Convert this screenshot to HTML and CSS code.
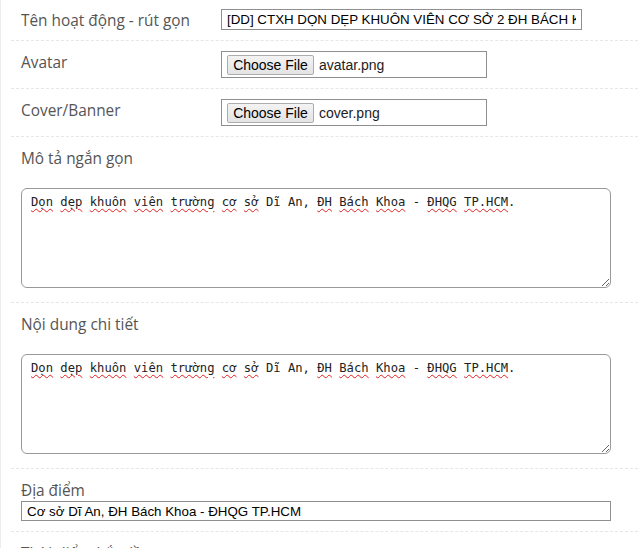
FILE: index.html
```html
<!DOCTYPE html>
<html lang="vi">
<head>
<meta charset="utf-8">
<title>Form hoạt động</title>
<link rel="stylesheet" href="styles.css">
</head>
<body>
<div class="panel">
  <div class="row row-inline">
    <label class="label">Tên hoạt động - rút gọn</label>
    <input class="text-input short" type="text" value="[DD] CTXH DỌN DẸP KHUÔN VIÊN CƠ SỞ 2 ĐH BÁCH KHOA">
  </div>
  <div class="row row-inline row-file">
    <label class="label">Avatar</label>
    <div class="file-box"><span class="file-btn">Choose File</span><span class="file-name">avatar.png</span></div>
  </div>
  <div class="row row-inline row-file">
    <label class="label">Cover/Banner</label>
    <div class="file-box"><span class="file-btn">Choose File</span><span class="file-name">cover.png</span></div>
  </div>
  <div class="row row-stack">
    <label class="label">Mô tả ngắn gọn</label>
    <div class="area"><span class="sp">Dọn</span> <span class="sp">dẹp</span> <span class="sp">khuôn</span> <span class="sp">viên</span> <span class="sp">trường</span> <span class="sp">cơ</span> <span class="sp">sở</span> Dĩ An, <span class="sp">ĐH</span> <span class="sp">Bách</span> <span class="sp">Khoa</span> - <span class="sp">ĐHQG</span> <span class="sp">TP.HCM</span>.</div>
  </div>
  <div class="row row-stack">
    <label class="label">Nội dung chi tiết</label>
    <div class="area"><span class="sp">Dọn</span> <span class="sp">dẹp</span> <span class="sp">khuôn</span> <span class="sp">viên</span> <span class="sp">trường</span> <span class="sp">cơ</span> <span class="sp">sở</span> Dĩ An, <span class="sp">ĐH</span> <span class="sp">Bách</span> <span class="sp">Khoa</span> - <span class="sp">ĐHQG</span> <span class="sp">TP.HCM</span>.</div>
  </div>
  <div class="row row-place">
    <label class="label">Địa điểm</label>
    <input class="text-input wide" type="text" value="Cơ sở Dĩ An, ĐH Bách Khoa - ĐHQG TP.HCM">
  </div>
  <div class="row row-place">
    <label class="label">Thời điểm bắt đầu</label>
  </div>
</div>
</body>
</html>
```

FILE: styles.css
```css
html, body {
  margin: 0;
  padding: 0;
  background: #fff;
}
body {
  font-family: "Open Sans", "Noto Sans", sans-serif;
}
.panel {
  border-left: 1px solid #ececec;
  min-height: 548px;
  box-sizing: border-box;
}
.row {
  margin-left: 10px;
  padding-left: 10px;
  border-bottom: 1px dashed #e6e6e6;
}
.label {
  display: block;
  font-size: 15.4px;
  line-height: 20px;
  color: #555;
  margin-top: 2px;
}
.row-inline {
  display: flex;
  align-items: flex-start;
  padding-top: 9px;
  padding-bottom: 10px;
}
.row-inline .label {
  width: 200px;
  height: 19px;
  flex: none;
}
.row-file {
  padding-top: 10px;
  padding-bottom: 10px;
}
.text-input {
  box-sizing: border-box;
  height: 21px;
  margin: 0;
  padding: 0 5px;
  border: 1px solid #8f8f8f;
  border-radius: 0;
  font-family: "Liberation Sans", Arial, sans-serif;
  font-size: 13.333px;
  color: #000;
  background: #fff;
  outline: none;
}
.short {
  width: 361px;
}
.wide {
  width: 590px;
  height: 20px;
  margin-top: 0;
  display: block;
}
.file-box {
  box-sizing: border-box;
  width: 266px;
  height: 27px;
  border: 1px solid #8f8f8f;
  display: flex;
  align-items: center;
  padding-left: 5px;
  font-family: "Liberation Sans", Arial, sans-serif;
  font-size: 13.333px;
}
.file-btn {
  box-sizing: border-box;
  height: 20px;
  width: 87px;
  display: flex;
  align-items: center;
  justify-content: center;
  border: 1px solid #adadad;
  border-radius: 2px;
  background: linear-gradient(#f3f3f3, #e3e3e3);
  color: #000;
  font-size: 14px;
}
.file-name {
  margin-left: 5px;
  color: #222;
  font-size: 14px;
}
.row-stack {
  padding-top: 10px;
  padding-bottom: 14px;
}
.area {
  box-sizing: border-box;
  margin-top: 19px;
  width: 590px;
  height: 100px;
  border: 1px solid #999;
  border-radius: 6px;
  padding: 6px 9px;
  font-family: "DejaVu Sans Mono", "Liberation Mono", monospace;
  font-size: 12.2px;
  line-height: 15px;
  color: #222;
  resize: both;
  overflow: auto;
  white-space: pre-wrap;
}
.sp {
  text-decoration: underline wavy #e02020;
  text-decoration-thickness: 1px;
  text-underline-offset: 2px;
}
.row-place {
  padding-top: 10px;
  padding-bottom: 10px;
}
```
